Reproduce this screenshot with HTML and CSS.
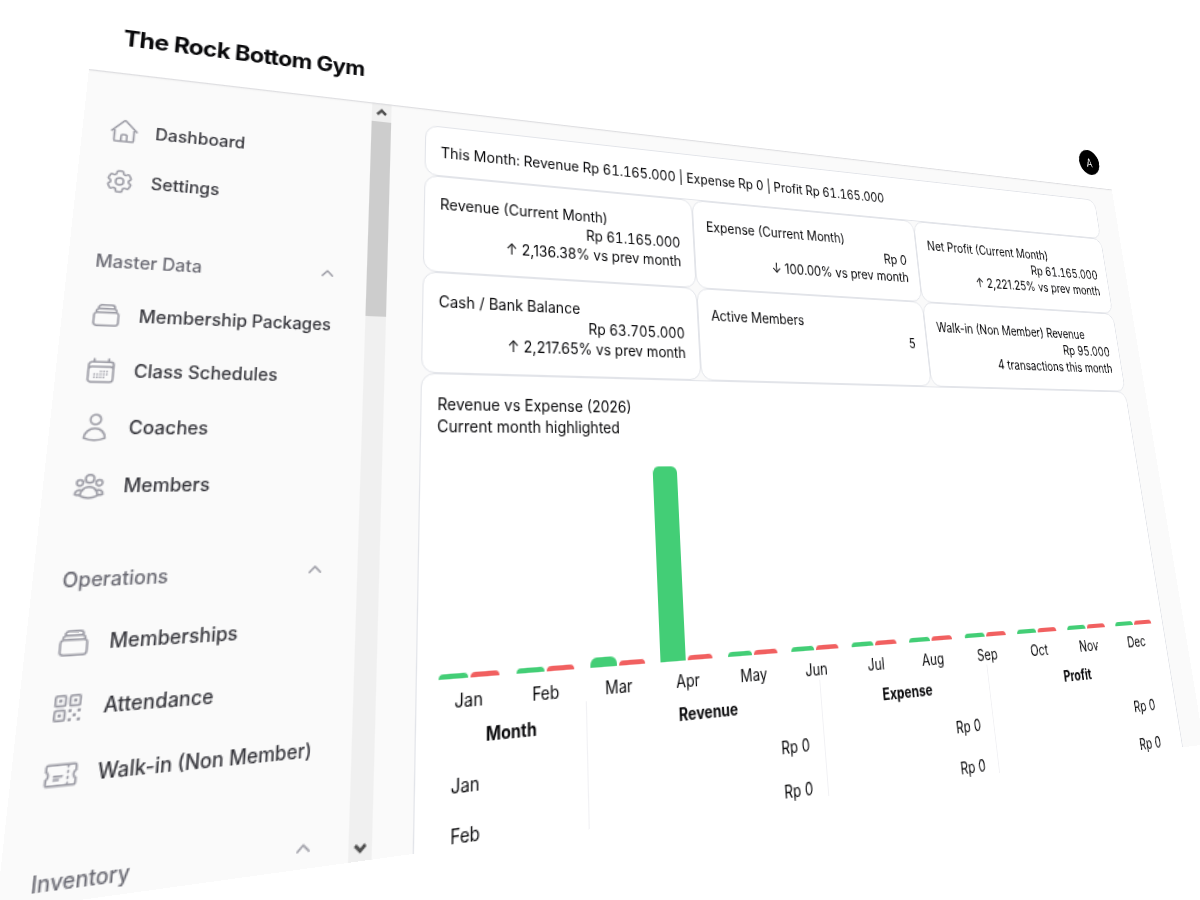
FILE: index.html
```html
<!DOCTYPE html>
<html lang="en">
<head>
    <meta charset="UTF-8">
    <meta name="viewport" content="width=device-width, initial-scale=1.0">
    <title>Dashboard - The Rock Bottom Gym</title>
    <link rel="stylesheet" href="styles.css">
</head>
<body>
    <div class="shell">
        <header class="topbar">
            <a class="brand" href="#">The Rock Bottom Gym</a>
            <button class="avatar" type="button" aria-label="Account">A</button>
        </header>

        <div class="layout">
            <aside class="sidebar">
                <nav class="nav">
                    <div class="nav-group">
                        <a class="nav-item" href="#">
                            <svg class="icon" viewBox="0 0 24 24"><path d="m2.25 12 8.954-8.955c.44-.439 1.152-.439 1.591 0L21.75 12M4.5 9.75v10.125c0 .621.504 1.125 1.125 1.125H9.75v-4.875c0-.621.504-1.125 1.125-1.125h2.25c.621 0 1.125.504 1.125 1.125V21h4.125c.621 0 1.125-.504 1.125-1.125V9.75M8.25 21h8.25"/></svg>
                            Dashboard
                        </a>
                        <a class="nav-item" href="#">
                            <svg class="icon" viewBox="0 0 24 24"><path d="M9.594 3.94c.09-.542.56-.94 1.11-.94h2.593c.55 0 1.02.398 1.11.94l.213 1.281c.063.374.313.686.645.87.074.04.147.083.22.127.325.196.72.257 1.075.124l1.217-.456a1.125 1.125 0 0 1 1.37.49l1.296 2.247a1.125 1.125 0 0 1-.26 1.431l-1.003.827c-.293.241-.438.613-.43.992a7.723 7.723 0 0 1 0 .255c-.008.378.137.75.43.991l1.004.827c.424.35.534.955.26 1.43l-1.298 2.247a1.125 1.125 0 0 1-1.369.491l-1.217-.456c-.355-.133-.75-.072-1.076.124a6.47 6.47 0 0 1-.22.128c-.331.183-.581.495-.644.869l-.213 1.281c-.09.543-.56.94-1.11.94h-2.594c-.55 0-1.019-.398-1.11-.94l-.213-1.281c-.062-.374-.312-.686-.644-.87a6.52 6.52 0 0 1-.22-.127c-.325-.196-.72-.257-1.076-.124l-1.217.456a1.125 1.125 0 0 1-1.369-.49l-1.297-2.247a1.125 1.125 0 0 1 .26-1.431l1.004-.827c.292-.24.437-.613.43-.991a6.932 6.932 0 0 1 0-.255c.007-.38-.138-.751-.43-.992l-1.004-.827a1.125 1.125 0 0 1-.26-1.43l1.297-2.247a1.125 1.125 0 0 1 1.37-.491l1.216.456c.356.133.751.072 1.076-.124.072-.044.146-.086.22-.128.332-.183.582-.495.644-.869l.214-1.28Z"/><path d="M15 12a3 3 0 1 1-6 0 3 3 0 0 1 6 0Z"/></svg>
                            Settings
                        </a>
                    </div>

                    <div class="nav-group">
                        <button class="nav-label" type="button">
                            Master Data
                            <svg class="chevron" viewBox="0 0 20 20"><path d="M9.47 6.47a.75.75 0 0 1 1.06 0l4.25 4.25a.75.75 0 1 1-1.06 1.06L10 8.06l-3.72 3.72a.75.75 0 0 1-1.06-1.06l4.25-4.25Z"/></svg>
                        </button>
                        <a class="nav-item" href="#">
                            <svg class="icon" viewBox="0 0 24 24"><path d="M6 6.878V6a2.25 2.25 0 0 1 2.25-2.25h7.5A2.25 2.25 0 0 1 18 6v.878m-12 0c.235-.083.487-.128.75-.128h10.5c.263 0 .515.045.75.128m-12 0A2.25 2.25 0 0 0 4.5 9v.878m13.5-3A2.25 2.25 0 0 1 19.5 9v.878m0 0a2.246 2.246 0 0 0-.75-.128H5.25c-.263 0-.515.045-.75.128m15 0A2.25 2.25 0 0 1 21 12v6a2.25 2.25 0 0 1-2.25 2.25H5.25A2.25 2.25 0 0 1 3 18v-6c0-.98.626-1.813 1.5-2.122"/></svg>
                            Membership Packages
                        </a>
                        <a class="nav-item" href="#">
                            <svg class="icon" viewBox="0 0 24 24"><path d="M6.75 3v2.25M17.25 3v2.25M3 18.75V7.5a2.25 2.25 0 0 1 2.25-2.25h13.5A2.25 2.25 0 0 1 21 7.5v11.25m-18 0A2.25 2.25 0 0 0 5.25 21h13.5A2.25 2.25 0 0 0 21 18.75m-18 0v-7.5A2.25 2.25 0 0 1 5.25 9h13.5A2.25 2.25 0 0 1 21 11.25v7.5m-9-6h.008v.008H12v-.008ZM12 15h.008v.008H12V15Zm0 2.25h.008v.008H12v-.008ZM9.75 15h.008v.008H9.75V15Zm0 2.25h.008v.008H9.75v-.008ZM7.5 15h.008v.008H7.5V15Zm0 2.25h.008v.008H7.5v-.008Zm6.75-4.5h.008v.008h-.008v-.008Zm0 2.25h.008v.008h-.008V15Zm0 2.25h.008v.008h-.008v-.008Zm2.25-4.5h.008v.008H16.5v-.008Zm0 2.25h.008v.008H16.5V15Z"/></svg>
                            Class Schedules
                        </a>
                        <a class="nav-item" href="#">
                            <svg class="icon" viewBox="0 0 24 24"><path d="M15.75 6a3.75 3.75 0 1 1-7.5 0 3.75 3.75 0 0 1 7.5 0ZM4.501 20.118a7.5 7.5 0 0 1 14.998 0A17.933 17.933 0 0 1 12 21.75c-2.676 0-5.216-.584-7.499-1.632Z"/></svg>
                            Coaches
                        </a>
                        <a class="nav-item" href="#">
                            <svg class="icon" viewBox="0 0 24 24"><path d="M18 18.72a9.094 9.094 0 0 0 3.741-.479 3 3 0 0 0-4.682-2.72m.94 3.198.001.031c0 .225-.012.447-.037.666A11.944 11.944 0 0 1 12 21c-2.17 0-4.207-.576-5.963-1.584A6.062 6.062 0 0 1 6 18.719m12 0a5.971 5.971 0 0 0-.941-3.197m0 0A5.995 5.995 0 0 0 12 12.75a5.995 5.995 0 0 0-5.058 2.772m0 0a3 3 0 0 0-4.681 2.72 8.986 8.986 0 0 0 3.74.477m.94-3.197a5.971 5.971 0 0 0-.94 3.197M15 6.75a3 3 0 1 1-6 0 3 3 0 0 1 6 0Zm6 3a2.25 2.25 0 1 1-4.5 0 2.25 2.25 0 0 1 4.5 0Zm-13.5 0a2.25 2.25 0 1 1-4.5 0 2.25 2.25 0 0 1 4.5 0Z"/></svg>
                            Members
                        </a>
                    </div>

                    <div class="nav-group">
                        <button class="nav-label" type="button">
                            Operations
                            <svg class="chevron" viewBox="0 0 20 20"><path d="M9.47 6.47a.75.75 0 0 1 1.06 0l4.25 4.25a.75.75 0 1 1-1.06 1.06L10 8.06l-3.72 3.72a.75.75 0 0 1-1.06-1.06l4.25-4.25Z"/></svg>
                        </button>
                        <a class="nav-item" href="#">
                            <svg class="icon" viewBox="0 0 24 24"><path d="M6 6.878V6a2.25 2.25 0 0 1 2.25-2.25h7.5A2.25 2.25 0 0 1 18 6v.878m-12 0c.235-.083.487-.128.75-.128h10.5c.263 0 .515.045.75.128m-12 0A2.25 2.25 0 0 0 4.5 9v.878m13.5-3A2.25 2.25 0 0 1 19.5 9v.878m0 0a2.246 2.246 0 0 0-.75-.128H5.25c-.263 0-.515.045-.75.128m15 0A2.25 2.25 0 0 1 21 12v6a2.25 2.25 0 0 1-2.25 2.25H5.25A2.25 2.25 0 0 1 3 18v-6c0-.98.626-1.813 1.5-2.122"/></svg>
                            Memberships
                        </a>
                        <a class="nav-item" href="#">
                            <svg class="icon" viewBox="0 0 24 24"><path d="M3.75 4.875c0-.621.504-1.125 1.125-1.125h4.5c.621 0 1.125.504 1.125 1.125v4.5c0 .621-.504 1.125-1.125 1.125h-4.5A1.125 1.125 0 0 1 3.75 9.375v-4.5ZM3.75 14.625c0-.621.504-1.125 1.125-1.125h4.5c.621 0 1.125.504 1.125 1.125v4.5c0 .621-.504 1.125-1.125 1.125h-4.5a1.125 1.125 0 0 1-1.125-1.125v-4.5ZM13.5 4.875c0-.621.504-1.125 1.125-1.125h4.5c.621 0 1.125.504 1.125 1.125v4.5c0 .621-.504 1.125-1.125 1.125h-4.5A1.125 1.125 0 0 1 13.5 9.375v-4.5Z"/><path d="M6.75 6.75h.75v.75h-.75v-.75ZM6.75 16.5h.75v.75h-.75v-.75ZM16.5 6.75h.75v.75h-.75v-.75ZM13.5 13.5h.75v.75h-.75v-.75ZM13.5 19.5h.75v.75h-.75v-.75ZM19.5 13.5h.75v.75h-.75v-.75ZM19.5 19.5h.75v.75h-.75v-.75ZM16.5 16.5h.75v.75h-.75v-.75Z"/></svg>
                            Attendance
                        </a>
                        <a class="nav-item" href="#">
                            <svg class="icon" viewBox="0 0 24 24"><path d="M16.5 6v.75m0 3v.75m0 3v.75m0 3V18m-9-5.25h5.25M7.5 15h3M3.375 5.25c-.621 0-1.125.504-1.125 1.125v3.026a2.999 2.999 0 0 1 0 5.198v3.026c0 .621.504 1.125 1.125 1.125h17.25c.621 0 1.125-.504 1.125-1.125v-3.026a2.999 2.999 0 0 1 0-5.198V6.375c0-.621-.504-1.125-1.125-1.125H3.375Z"/></svg>
                            Walk-in (Non Member)
                        </a>
                    </div>

                    <div class="nav-group">
                        <button class="nav-label" type="button">
                            Inventory
                            <svg class="chevron" viewBox="0 0 20 20"><path d="M9.47 6.47a.75.75 0 0 1 1.06 0l4.25 4.25a.75.75 0 1 1-1.06 1.06L10 8.06l-3.72 3.72a.75.75 0 0 1-1.06-1.06l4.25-4.25Z"/></svg>
                        </button>
                    </div>
                </nav>

                <div class="scrollbar">
                    <svg class="scroll-arrow" viewBox="0 0 18 18"><path d="m5 11 4-4 4 4"/></svg>
                    <div class="scroll-thumb"></div>
                    <svg class="scroll-arrow scroll-down" viewBox="0 0 18 18"><path d="m5 7 4 4 4-4"/></svg>
                </div>
            </aside>

            <main class="main">
                <section class="card summary">This Month: Revenue Rp 61.165.000 | Expense Rp 0 | Profit Rp 61.165.000</section>

                <section class="stats">
                    <div class="card">
                        <div>Revenue (Current Month)</div>
                        <div class="value amount">Rp 61.165.000</div>
                        <div class="value">↑ 2,136.38% vs prev month</div>
                    </div>
                    <div class="card">
                        <div>Expense (Current Month)</div>
                        <div class="value amount">Rp 0</div>
                        <div class="value">↓ 100.00% vs prev month</div>
                    </div>
                    <div class="card">
                        <div>Net Profit (Current Month)</div>
                        <div class="value amount">Rp 61.165.000</div>
                        <div class="value">↑ 2,221.25% vs prev month</div>
                    </div>
                    <div class="card">
                        <div>Cash / Bank Balance</div>
                        <div class="value amount">Rp 63.705.000</div>
                        <div class="value">↑ 2,217.65% vs prev month</div>
                    </div>
                    <div class="card">
                        <div>Active Members</div>
                        <div class="value amount">5</div>
                    </div>
                    <div class="card">
                        <div>Walk-in (Non Member) Revenue</div>
                        <div class="value amount">Rp 95.000</div>
                        <div class="value">4 transactions this month</div>
                    </div>
                </section>

                <section class="card">
                    <div>Revenue vs Expense (2026)</div>
                    <div>Current month highlighted</div>

                    <div class="chart" id="chart"></div>

                    <table class="months">
                        <thead>
                            <tr><th class="col-month">Month</th><th class="col-revenue">Revenue</th><th class="col-expense">Expense</th><th>Profit</th></tr>
                        </thead>
                        <tbody>
                            <tr><td>Jan</td><td>Rp 0</td><td>Rp 0</td><td>Rp 0</td></tr>
                            <tr><td>Feb</td><td>Rp 0</td><td>Rp 0</td><td>Rp 0</td></tr>
                        </tbody>
                    </table>
                </section>
            </main>
        </div>
    </div>

    <script>
        const months = ['Jan', 'Feb', 'Mar', 'Apr', 'May', 'Jun', 'Jul', 'Aug', 'Sep', 'Oct', 'Nov', 'Dec'];
        const revenue = [4, 4, 8, 169, 4, 4, 4, 4, 4, 4, 4, 4];
        const expense = [4, 4, 4, 4, 4, 4, 4, 4, 4, 4, 4, 4];

        document.getElementById('chart').innerHTML = months.map((month, i) => `
            <div>
                <div class="bars">
                    <div class="bar income" style="height: ${revenue[i]}px"></div>
                    <div class="bar outcome" style="height: ${expense[i]}px"></div>
                </div>
                <div>${month}</div>
            </div>`).join('');
    </script>
</body>
</html>
```
FILE: styles.css
```css
* {
    box-sizing: border-box;
}
body {
    margin: 0;
    height: 100vh;
    overflow: hidden;
    background: #fff;
    color: #09090b;
    font-family: Inter, "Liberation Sans", sans-serif;
    font-size: 14px;
    line-height: 19px;
}

/* the whole dashboard is a tilted plane */
.shell {
    display: flex;
    flex-direction: column;
    width: 95.5vw;
    height: 76.1vh;
    overflow: hidden;
    transform-origin: 0 64px;
    transform: matrix3d(1.339998, 0.155676, 0, 0.00040262, -0.148543, 1.099359, 0, -0.00030378, 0, 0, 1, 0, 89, 5, 0, 1);
}

.topbar {
    position: relative;
    z-index: 1;
    display: flex;
    align-items: center;
    justify-content: space-between;
    flex: none;
    height: 64px;
    padding: 0 14px 0 24px;
    box-shadow: 0 1px 0 #dedee1, 0 1px 2px rgba(0, 0, 0, 0.08);
}
.brand {
    color: #09090b;
    font-size: 20px;
    font-weight: 700;
    letter-spacing: -0.025em;
    text-decoration: none;
}
.avatar {
    width: 32px;
    height: 32px;
    padding: 0;
    border: 0;
    border-radius: 50%;
    background: #000;
    color: #fff;
    font-family: inherit;
    font-size: 14px;
}

.layout {
    display: flex;
    flex: 1;
    min-height: 0;
    background: #fafafa;
}
.sidebar {
    display: flex;
    flex: none;
    width: 256px;
}
.nav {
    display: flex;
    flex: 1;
    flex-direction: column;
    gap: 28px;
    padding: 32px 12px;
    overflow: hidden;
}
.nav-group {
    display: flex;
    flex: none;
    flex-direction: column;
    gap: 4px;
}
.nav-item {
    display: flex;
    align-items: center;
    gap: 12px;
    padding: 8px;
    color: #37373d;
    font-weight: 500;
    line-height: 24px;
    text-decoration: none;
    white-space: nowrap;
}
.nav-label {
    display: flex;
    align-items: center;
    justify-content: space-between;
    padding: 8px 12px 8px 8px;
    border: 0;
    background: none;
    color: #6b6b74;
    font-family: inherit;
    font-size: 14px;
    font-weight: 500;
    line-height: 24px;
}
.icon {
    width: 24px;
    height: 24px;
    fill: none;
    stroke: #9d9da6;
    stroke-width: 1.5;
    stroke-linecap: round;
    stroke-linejoin: round;
}
.chevron {
    width: 20px;
    height: 20px;
    fill: #9d9da6;
}

.scrollbar {
    display: flex;
    flex-direction: column;
    width: 18px;
    background: #f0f0f0;
}
.scroll-arrow {
    width: 18px;
    height: 18px;
    fill: none;
    stroke: #505050;
    stroke-width: 2.5;
}
.scroll-thumb {
    height: 181px;
    background: #cdcdcd;
}
.scroll-down {
    margin-top: auto;
}

.main {
    flex: 1;
    padding: 16px 31px 16px 32px;
    overflow: hidden;
}
.card {
    padding: 16px 14px;
    border: 1px solid #e2e4e9;
    border-radius: 12px;
    background: #fff;
}
.summary {
    padding-top: 15px;
    padding-bottom: 13px;
    font-variant-numeric: tabular-nums;
}
.stats {
    display: grid;
    grid-template-columns: repeat(3, 1fr);
}
.value {
    text-align: right;
}
.amount {
    font-variant-numeric: tabular-nums;
}

.chart {
    display: grid;
    grid-template-columns: repeat(12, 1fr);
    gap: 12px;
    margin-top: 26px;
    padding-left: 2px;
    text-align: center;
}
.bars {
    display: flex;
    align-items: flex-end;
    justify-content: center;
    gap: 2px;
    height: 169px;
    margin-bottom: 7px;
}
.bar {
    width: 25px;
    border-radius: 6px 6px 0 0;
    opacity: 0.85;
}
.income {
    background: #22c55e;
}
.outcome {
    background: #ef4444;
}

.months {
    width: 100%;
    border-collapse: collapse;
    table-layout: fixed;
}
.months th,
.months td {
    height: 36px;
    padding: 0 15px;
    border-right: 1px solid #f1f1f4;
    text-align: right;
}
.months th {
    height: 35px;
    font-weight: 700;
    text-align: center;
}
.months td:first-child {
    text-align: left;
}
.months th:last-child,
.months td:last-child {
    border-right: 0;
}
.col-month {
    width: 133px;
}
.col-revenue {
    width: 235px;
}
.col-expense {
    width: 197px;
}
```
